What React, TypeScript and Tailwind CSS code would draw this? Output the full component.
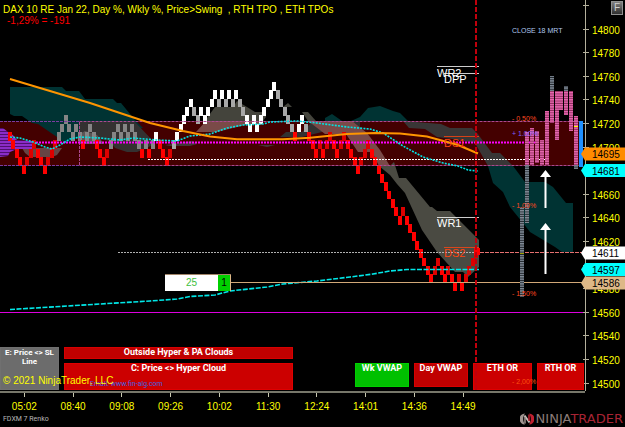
import clsx from "clsx";

// price scale: 20 points = 23.6px
const priceToY = (price: number) => 29.5 + (14800 - price) * 1.18;

const PRICES = Array.from({ length: 17 }, (_, i) => 14820 - i * 20);

// no room for these labels next to the markers and the top edge
const HIDDEN_PRICES = [14820, 14680, 14600];

const TIMES = [
  "05:02",
  "08:40",
  "09:08",
  "09:26",
  "10:02",
  "11:30",
  "12:24",
  "14:01",
  "14:36",
  "14:49",
];

const MARKERS = [
  { price: 14695, y: 154, fill: "#ff8c00" },
  { price: 14681, y: 170.5, fill: "#00ffff" },
  { price: 14611, y: 253, fill: "#ffffff" },
  { price: 14597, y: 269.5, fill: "#00ffff" },
  { price: 14586, y: 283, fill: "#deb887" },
];

// renko bricks: row offset from the open, followed by r(ed), g(ray) or w(hite)
const BRICKS =
  "0r 1r 2r 3r 4r 3r 2r 1r 2r 3r 4r 3r 2r 1r 0g -1g -2g -1g 0g -1g 0g 1r 0g -1g 0g 1r 2r 3r 2r 1g 0g -1g 0g -1g 0g -1g 0g 1g 2r 1g 2r 1g 0w 1r 2r 3r 2r 1g 0w -1w -2w -3w -4w -3g -2g -3w -2w -3w -4w -5w -4g -5w -4g -5w -4g -5w -4g -3g -2w -1w -2w -1w -2w -3w -4w -5w -6w -5g -4g -3g -2g -1g 0r -1w -2w -1g 0r 1r 2r 1r 2r 1r 0r 1r 2r 1r 0r 1r 2r 3r 4r 3r 2r 1r 2r 3r 4r 5r 6r 7r 8r 9r 10r 9r 10r 11r 12r 13r 14r 15r 16r 17r 16r 15r 16r 17r 16r 17r 18r 17r 18r 17r 16r 15r 14r"
    .split(" ")
    .map((b) => ({ row: parseInt(b), tone: b.slice(-1) }));

const brickFill = (i: number) => {
  const { row, tone } = BRICKS[i];
  if (tone === "w") return "#ffffff";
  if (tone === "g") return i < 42 ? "#858585" : "#a8a8a8";
  return i > 0 && BRICKS[i - 1].row > row ? "#dc0000" : "#ff0000";
};

const PROFILE = [
  { x: 520, top: 207, bottom: 297, kind: "gray" },
  { x: 525, top: 132, bottom: 165, kind: "pink" },
  { x: 525, top: 165, bottom: 223, kind: "gray" },
  { x: 530, top: 128, bottom: 165, kind: "pink" },
  { x: 535, top: 131, bottom: 163, kind: "pink" },
  { x: 540, top: 140, bottom: 165, kind: "pink" },
  { x: 545, top: 111, bottom: 165, kind: "pink" },
  { x: 550, top: 76, bottom: 91, kind: "gray" },
  { x: 550, top: 91, bottom: 123, kind: "pink" },
  { x: 555, top: 91, bottom: 140, kind: "pink" },
  { x: 559, top: 91, bottom: 110, kind: "pink" },
  { x: 564, top: 86, bottom: 91, kind: "gray" },
  { x: 564, top: 91, bottom: 115, kind: "pink" },
  { x: 569, top: 91, bottom: 131, kind: "pink" },
  { x: 574, top: 116, bottom: 165, kind: "pink" },
  { x: 574, top: 165, bottom: 169, kind: "gray" },
];

const PERCENTS = [
  { label: "- 0.50%", y: 121, fill: "#ff4820" },
  { label: "+ 1.00%", y: 136, fill: "#7a60ff" },
  { label: "- 1.00%", y: 208, fill: "#ff4820" },
  { label: "- 1.50%", y: 296, fill: "#ff4820" },
];

const LEVELS = [
  { label: "WR2", x: 437, line: 66, text: 77, fill: "#ffffff" },
  { label: "DPP", x: 444, line: 73, text: 83, fill: "#ffffff" },
  { label: "WR1", x: 437, line: 217, text: 227, fill: "#ffffff" },
  { label: "DS1", x: 444, line: 136, text: 147, fill: "#ff4510" },
  { label: "DS2", x: 444, line: 247, text: 257, fill: "#ff4510" },
];

const Chart = () => {
  return (
    <svg
      viewBox="0 0 625 391"
      className="block h-auto w-full"
      role="img"
      aria-label="DAX renko chart"
    >
      <defs>
        <pattern id="pink" width="5" height="2.36" patternUnits="userSpaceOnUse">
          <rect width="5" height="2.36" fill="#8c2c5c" />
          <rect width="5" height="1.4" fill="#e868b0" />
        </pattern>
        <pattern id="gray" width="5" height="2.36" patternUnits="userSpaceOnUse">
          <rect width="5" height="2.36" fill="#20262c" />
          <rect width="5" height="1.4" fill="#828c98" />
        </pattern>
        <pattern id="purple" width="5" height="3" patternUnits="userSpaceOnUse">
          <rect width="5" height="3" fill="#501070" />
          <rect width="5" height="2" fill="#8a2cc8" />
        </pattern>
      </defs>

      {/* swing range */}
      <rect x="0" y="121" width="582" height="45" fill="#440000" />

      {/* clouds */}
      <path
        fill="#003333"
        d="M10 87H62L66 91H79L85 99H113L117 103H121L135 120L143 128L79 137L66 144L57 137L38 124L32 123L22 116H14L10 114Z"
      />
      <path
        fill="#333131"
        d="M79 122H135L155 143L147 148L137 152L127 152L115 148L110 141L79 136Z"
      />
      <path fill="#664444" d="M22 148H62L57 155L52 157H30L25 153Z" />
      <path fill="#5a5656" d="M78 135L85 131L97 135L104 144H79Z" />
      <path fill="#333131" d="M280 137L286 132H302L313 121H360V128H330L322 132L302 137Z" />
      <path fill="#403636" d="M165 145L192 141L197 144L190 146H170ZM258 145H275L267 147Z" />
      <path fill="#44443c" d="M203 121L207 118L215 107H233L237 101L247 107L255 112H266V117L263 121Z" />
      <path fill="#7a4a48" d="M196 132L206 121H263L262 125H245L217 132Z" />
      <path fill="#44443c" d="M283 107L288 103L292 107Z" />
      <path fill="#003333" d="M325 118L332 114L342 121H351L360 117L368 108L380 106L393 111L400 113L408 121H325Z" />
      <path
        fill="#383636"
        d="M403 121L441 124L450 128H472L477 133L492 153H500L513 166H488L475 143L460 140L437 137L425 129L409 128Z"
      />
      <path
        fill="#003333"
        d="M513 166L525 182H545L553 187L566 203H573V252H562L555 247L530 232L523 223L510 207L503 192L493 183L488 166Z"
      />
      <path fill="#44443c" d="M302 112H308L316 121H308Z" />
      <path fill="#7a4a48" d="M308 121H352L367 133L380 150L390 166H379L372 152H358L346 134H325L312 124Z" />
      <path
        fill="#4a4a42"
        d="M379 166H390L394 162L399 178H406L430 207H432L437 211H450L457 218L479 240V267L468 277L463 272H455L437 252L422 230L405 193L397 184L390 175Z"
      />

      {/* overnight profile */}
      <path fill="url(#purple)" d="M0 128H3L8 132L12 134L17 140L33 141V149H17L10 152L8 156L0 157Z" />

      {/* bricks */}
      <g shapeRendering="crispEdges">
        {BRICKS.map((b, i) => (
          <rect
            key={i}
            x={8 + i * 3.48}
            y={132 + b.row * 8.37}
            width="4"
            height="8.8"
            fill={brickFill(i)}
          />
        ))}
        <rect x="474" y="248" width="6" height="7" fill="#ff0000" />
      </g>

      {/* range outline */}
      <g fill="none" strokeDasharray="3 1">
        <path d="M0 121.5H79M0 165.5H79" stroke="#7a3ca0" />
        <path d="M79.5 121.5H582M79.5 165.5H582M79.5 122V166" stroke="#ac4890" />
      </g>
      <path d="M36 142.5H540" stroke="#ff00ff" strokeWidth="2" strokeDasharray="2 1" />
      <path d="M148 159.5H549" stroke="#ffffff" strokeDasharray="2 1" />

      {/* averages */}
      <path
        fill="none"
        stroke="#00e5e5"
        strokeWidth="1.6"
        strokeDasharray="2 1.2"
        d="M10 137L20 138L33 142L45 147L52 149L60 145L70 139L80 137L100 138L120 140L133 138L157 140L177 141L190 136L210 134L227 128L243 125L263 124L270 122L297 121L317 123L347 127L370 129L383 133L403 146L423 157L443 163L458 166L468 170L478 171"
      />
      <path
        fill="none"
        stroke="#ff9500"
        strokeWidth="2"
        d="M10 79L30 85L60 94L90 103L120 113L150 123L183 131L210 136.5L237 139.3H283L310 137.7L347 134L375 133L400 133.5L427 136.5L458 145L478 153.5"
      />
      <path
        fill="none"
        stroke="#00e8e8"
        strokeWidth="1.6"
        strokeDasharray="5 1.5"
        d="M10 309.5L60 306.5L100 304L150 301L177 299L190 296.5L215 295L230 291L267 287L283 284L317 281L350 277L373 274L390 271L407 269.5H479"
      />

      {/* horizontal levels */}
      <path d="M118 252.5H474" stroke="#b0b0b0" strokeDasharray="2 1" />
      <path d="M480 252.5H582" stroke="#e87070" strokeDasharray="4 1" />
      <path d="M231 282.5H583" stroke="#d2a878" />
      <path d="M0 312.5H585" stroke="#dd00dd" />

      <g fontFamily="Liberation Sans, sans-serif" fontSize="11">
        {LEVELS.map((l) => (
          <g key={l.label}>
            <rect x={l.x} y={l.line} width={479 - l.x} height="1" fill={l.fill} opacity="0.8" />
            <text x={l.x} y={l.text} fill={l.fill}>
              {l.label}
            </text>
          </g>
        ))}
      </g>

      {/* price profile */}
      {PROFILE.map((p) => (
        <rect
          key={`${p.x}-${p.top}`}
          x={p.x}
          y={p.top}
          width="4"
          height={p.bottom - p.top}
          fill={p.kind === "pink" ? "url(#pink)" : "url(#gray)"}
        />
      ))}
      <rect x="574" y="126" width="4" height="1" fill="#ffff00" />
      <rect x="520" y="253" width="4" height="1" fill="#a0a000" />
      <rect x="579" y="121" width="4" height="46" fill="#1e90ff" />

      <g fontFamily="Liberation Sans, sans-serif" fontSize="7">
        {PERCENTS.map((p) => (
          <text key={p.label} x="512" y={p.y} fill={p.fill}>
            {p.label}
          </text>
        ))}
        <text x="512" y="33" fill="#b0c8ec">
          CLOSE 18 MRT
        </text>
      </g>

      {/* targets */}
      <g fill="#ffffff">
        <path d="M545.5 170L551 177H546.5V208H544.5V177H540Z" />
        <path d="M545.5 223L551 230H546.5V274H544.5V230H540Z" />
      </g>

      {/* price axis */}
      <path d="M585.5 0V391" stroke="#b4b09c" />
      <g fontFamily="Liberation Sans, sans-serif" fontSize="10">
        {PRICES.map((price) => (
          <path
            key={price}
            d={`M583 ${Math.round(priceToY(price)) - 0.5}h6`}
            stroke="#b4b09c"
          />
        ))}
        {PRICES.filter((price) => !HIDDEN_PRICES.includes(price)).map((price) => (
          <text key={price} x="592" y={priceToY(price) + 4} fill="#ffff00">
            {price}
          </text>
        ))}
        {MARKERS.map((m) => (
          <g key={m.price}>
            <path d={`M581 ${m.y}l4 -6.5h40v13h-40z`} fill={m.fill} />
            <text x="592" y={m.y + 4} fill="#000000">
              {m.price}
            </text>
          </g>
        ))}
      </g>
    </svg>
  );
};

type SignalProps = {
  label: string;
  className?: string;
};

const Signal = ({ label, className }: SignalProps) => {
  return (
    <div
      className={clsx(
        "border text-center font-[Roboto,sans-serif] text-[9px] leading-[9px] font-bold text-white",
        className
      )}
    >
      {label}
    </div>
  );
};

const Signals = () => {
  return (
    <div className="absolute bottom-px left-0 flex h-[43px] w-[584px] items-start">
      <Signal
        label="E: Price <> SL Line"
        className="h-full w-[59px] border-[#707070] bg-[#6c6c6c] px-px !text-[8px]"
      />
      <div className="ml-[5px] flex h-full w-[229px] flex-col gap-1">
        <Signal
          label="Outside Hyper & PA Clouds"
          className="h-3 border-[#d80000] bg-[#c00000]"
        />
        <Signal
          label="C: Price <> Hyper Cloud"
          className="flex-1 border-[#e00000] bg-[#cc0000]"
        />
      </div>
      <div className="ml-auto flex h-[27px] items-start self-end">
        <Signal label="Wk VWAP" className="h-6 w-[54px] border-[#00d000] bg-[#00c000]" />
        <Signal
          label="Day VWAP"
          className="ml-[5px] h-6 w-[54px] border-[#d80000] bg-[#c00000]"
        />
        <Signal
          label="ETH OR"
          className="ml-[5px] h-full w-[59px] border-[#e00000] bg-[#cc0000]"
        />
        <Signal
          label="RTH OR"
          className="ml-[5px] h-full w-[47px] border-[#e00000] bg-[#cc0000]"
        />
      </div>
    </div>
  );
};

const Logo = () => {
  return (
    <div className="flex items-center gap-0.5 text-[13px] leading-3">
      <svg viewBox="0 0 14 12" className="h-3 w-[14px]" aria-hidden="true">
        <path d="M5 0.5A5.5 5.5 0 0 0 5 11.5C2.5 8 2.5 4 5 0.5Z" fill="#a09490" />
        <path d="M4.5 2.5L9.5 9.5" stroke="#c8bcb8" strokeWidth="2" />
        <path d="M5 4V10.5" stroke="#a09490" strokeWidth="1.5" />
        <path d="M9 0.5A5.5 5.5 0 0 1 9 11.5C11.5 8 11.5 4 9 0.5Z" fill="#c02030" />
        <path d="M9 1.5V8" stroke="#c02030" strokeWidth="1.5" />
      </svg>
      <p className="font-['DejaVu_Sans',sans-serif] text-[#8c7c78]">
        NINJA<span className="text-[#a82434]">TRADER</span>
      </p>
    </div>
  );
};

const App = () => {
  return (
    <div className="min-h-screen w-full overflow-hidden bg-black font-['Liberation_Sans',Arial,sans-serif]">
      <main className="relative">
        <Chart />
        <header className="absolute top-1 left-[3px] text-[10px] leading-[11px] whitespace-pre">
          <h1 className="text-[#ffff00]">
            DAX 10 RE Jan 22, Day %, Wkly %, Price&gt;Swing  , RTH TPO , ETH TPOs
          </h1>
          <p className="pl-1 text-[#ff0000]">-1,29% = -191</p>
        </header>
        <button
          type="button"
          className="absolute top-px right-0.5 h-[14px] w-3 border border-[#909090] bg-linear-to-b from-[#808080] to-[#303030] text-[10px] leading-3 text-[#d0d0d0]"
        >
          F
        </button>
        <div className="absolute top-[274px] left-[165px] flex h-[17px] w-[66px] border-t border-[#a08468] bg-white text-center text-[10px] leading-4">
          <span className="flex-1 text-[#40c040]">25</span>
          <span className="w-[13px] border-r border-[#deb887] bg-[#00d000] text-black">1</span>
        </div>
        <Signals />
        {/* session marker runs over the signal boxes */}
        <div className="absolute inset-y-0 left-[475px] w-0.5 bg-[repeating-linear-gradient(to_bottom,#c0000c_0_5px,transparent_5px_7px)]" />
        <span className="absolute bottom-1 left-[512px] text-[7px] leading-[10px] text-[#ff5010]">
          - 2,00%
        </span>
        <a
          href="#contact"
          className="absolute bottom-0.5 left-[90px] font-[Roboto,sans-serif] text-[7px] leading-[10px] text-[#4060e0]"
        >
          Email: www.fin-alg.com
        </a>
        <p className="absolute bottom-1 left-[3px] text-[10px] leading-3 text-[#ffff00]">
          © 2021 NinjaTrader, LLC
        </p>
      </main>
      <div className="mr-10 grid grid-cols-12 border-t-2 border-[#77776a]">
        {TIMES.map((time) => (
          <div key={time} className="flex flex-col items-center gap-1 text-[10px] text-[#ffff00]">
            <span className="h-1 w-px bg-[#c8c8b0]" />
            <time className="leading-3">{time}</time>
          </div>
        ))}
      </div>
      <footer className="flex items-center justify-between pr-0.5 pl-[3px]">
        <p className="font-[Roboto,sans-serif] text-[7px] text-[#b8b8b8]">FDXM 7 Renko</p>
        <Logo />
      </footer>
    </div>
  );
};

export default App;
